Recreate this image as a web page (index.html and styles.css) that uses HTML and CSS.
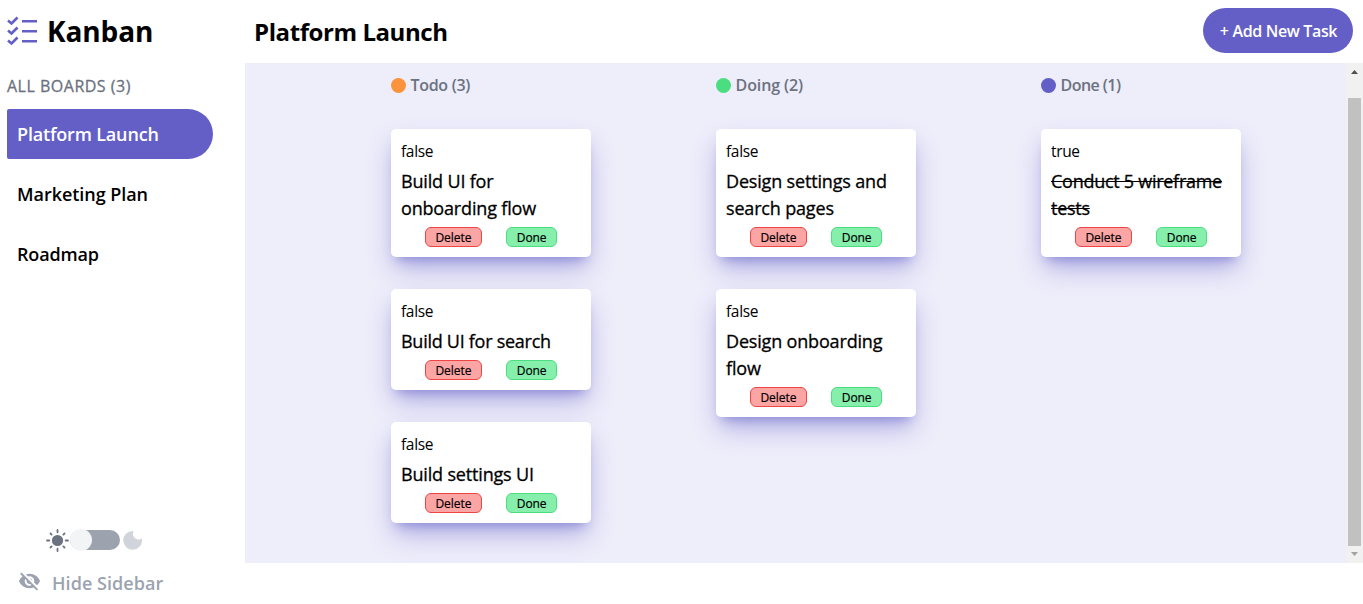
FILE: index.html
```
<!DOCTYPE html>
<html lang="en">
<head>
<meta charset="utf-8">
<title>Kanban</title>
<link rel="stylesheet" href="styles.css">
</head>
<body>
<div class="app">
  <aside class="sidebar">
    <div class="brand">
      <svg class="brand-icon" width="30" height="30" viewBox="0 0 30 30" fill="none" stroke="#635fc7">
        <path d="M1 4.500l3.500 3L10.500 1.500M1 14.500l3.500 3L10.500 11.500M1 24.500l3.500 3L10.500 21.500" stroke-width="2.600"/>
        <path d="M15 5.200h15M15 15.200h15M15 25.200h15" stroke-width="2.400"/>
      </svg>
      <h1 class="brand-name">Kanban</h1>
    </div>
    <p class="boards-label">ALL BOARDS (3)</p>
    <nav class="boards">
      <a class="board-link active">Platform Launch</a>
      <a class="board-link marketing">Marketing Plan</a>
      <a class="board-link roadmap">Roadmap</a>
    </nav>
    <div class="theme">
      <svg width="24" height="24" viewBox="0 0 24 24" fill="#6b7280" stroke="#6b7280" stroke-width="1.8" stroke-linecap="round">
        <circle cx="12.500" cy="12.500" r="4.700"/>
        <path d="M12.500 2v2.300M12.500 20.700V23M2 12.500h2.300M20.700 12.500H23M5.500 5.500l1.100 1.100M18.400 18.400l1.100 1.100M5.500 19.500l1.100-1.100M18.400 6.600l1.100-1.100"/>
      </svg>
      <span class="toggle"><span class="knob"></span></span>
      <svg class="moon" width="20" height="20" viewBox="0 0 20 20" fill="#d1d5db">
        <path d="M9.700 1A9.400 9.400 0 1 0 19 9.600c.1-.9-.6-1.300-1.300-.7A5.400 5.400 0 0 1 10.200 2.300c.3-.7.200-1.300-.5-1.300z"/>
      </svg>
    </div>
    <div class="hide">
      <svg class="eye" width="23" height="23" viewBox="0 0 24 24" fill="#9ca3af">
        <path d="M12 6.5c2.76 0 5 2.24 5 5 0 .51-.1 1-.24 1.46l3.06 3.06c1.39-1.23 2.49-2.77 3.18-4.53C21.27 7.11 17 4 12 4c-1.27 0-2.49.2-3.64.57l2.17 2.17c.47-.14.96-.24 1.47-.24zM2.71 3.16a.996.996 0 0 0 0 1.41l1.97 1.97A11.9 11.9 0 0 0 1 11.500C2.730 15.890 7 19 12 19c1.520 0 2.970-.3 4.310-.82l2.720 2.720a.996.996 0 1 0 1.410-1.410L4.130 3.160a.996.996 0 0 0-1.420 0zM12 16.500c-2.760 0-5-2.240-5-5 0-.77.18-1.500.49-2.140l1.570 1.570c-.03.180-.06.370-.06.570 0 1.660 1.340 3 3 3 .2 0 .38-.03.57-.07L14.140 16c-.65.320-1.370.5-2.140.5zm2.970-5.330a2.970 2.970 0 0 0-2.640-2.640l2.640 2.640z"/>
      </svg>
      <span>Hide Sidebar</span>
    </div>
  </aside>
  <main class="main">
    <header class="header">
      <h2 class="title">Platform Launch</h2>
      <button class="add">+ Add New Task</button>
    </header>
    <section class="board">
      <div class="columns">
        <div class="column">
          <h3 class="column-head"><i class="dot orange"></i><span>Todo (3)</span></h3>
          <article class="card"><p class="state">false</p><p class="name">Build UI for<br>onboarding flow</p><div class="actions"><button class="btn delete">Delete</button><button class="btn done">Done</button></div></article>
          <article class="card"><p class="state">false</p><p class="name tight">Build UI for search</p><div class="actions"><button class="btn delete">Delete</button><button class="btn done">Done</button></div></article>
          <article class="card"><p class="state">false</p><p class="name">Build settings UI</p><div class="actions"><button class="btn delete">Delete</button><button class="btn done">Done</button></div></article>
        </div>
        <div class="column">
          <h3 class="column-head doing"><i class="dot green"></i><span>Doing (2)</span></h3>
          <article class="card"><p class="state">false</p><p class="name">Design settings and<br>search pages</p><div class="actions"><button class="btn delete">Delete</button><button class="btn done">Done</button></div></article>
          <article class="card"><p class="state">false</p><p class="name">Design onboarding<br>flow</p><div class="actions"><button class="btn delete">Delete</button><button class="btn done">Done</button></div></article>
        </div>
        <div class="column">
          <h3 class="column-head finished"><i class="dot purple"></i><span>Done (1)</span></h3>
          <article class="card"><p class="state">true</p><p class="name tight struck">Conduct 5 wireframe<br>tests</p><div class="actions"><button class="btn delete">Delete</button><button class="btn done">Done</button></div></article>
        </div>
      </div>
      <div class="scrollbar">
        <svg width="17" height="17" viewBox="0 0 17 17" fill="#505050"><path d="M5 11h7L8.500 7z"/></svg>
        <div class="thumb"></div>
        <svg width="17" height="17" viewBox="0 0 17 17" fill="#a3a3a3"><path d="M5 6h7l-3.500 4z"/></svg>
      </div>
    </section>
  </main>
</div>
</body>
</html>
```
FILE: styles.css
```
* { box-sizing: border-box; margin: 0; padding: 0; }
body { font-family: "Open Sans", "Noto Sans", sans-serif; font-size: 16px; color: #000; background: #fff; overflow: hidden; }
button { font-family: inherit; color: inherit; }
svg { display: block; flex: none; }
.app { display: flex; height: 604px; }
.sidebar { width: 245px; flex: none; display: flex; flex-direction: column; padding-left: 7px; }
.brand { display: flex; align-items: center; gap: 10px; height: 62px; }
.brand-name { font-size: 28px; font-weight: 700; line-height: 40px; letter-spacing: -0.1px; }
.boards-label { margin-top: 12px; line-height: 24px; color: #6b7280; letter-spacing: 0.5px; -webkit-text-stroke: 0.3px; }
.boards { margin-top: 11px; display: flex; flex-direction: column; gap: 10px; }
.board-link { width: 206px; height: 50px; padding-left: 10px; line-height: 50px; font-size: 18px; font-weight: 600; letter-spacing: -0.17px; border-radius: 2px 25px 25px 2px; }
.marketing { letter-spacing: -0.05px; }
.active { color: #fff; background: #635fc7; }
.theme { margin-top: auto; padding-left: 38px; display: flex; align-items: center; height: 24px; }
.toggle { width: 50px; height: 20px; margin-left: 1px; border-radius: 10px; background: #9ca3af; display: flex; align-items: center; }
.knob { width: 22px; height: 22px; flex: none; border-radius: 50%; background: #f3f4f6; }
.moon { margin-left: 3px; }
.hide { display: flex; align-items: center; gap: 11px; height: 28px; margin: 17px 0 7px 11px; font-size: 18px; font-weight: 600; color: #9ca3af; letter-spacing: 0.05px; }
.eye { margin-bottom: 3px; }
.main { flex: 1; min-width: 0; }
.header { height: 63px; padding: 0 10px 2px 9px; display: flex; align-items: center; justify-content: space-between; }
.title { font-size: 24px; font-weight: 700; letter-spacing: -0.42px; padding-top: 1px; }
.add { width: 150px; height: 45px; border: 0; border-radius: 23px; background: #635fc7; color: #fff; font-size: 16px; font-weight: 600; letter-spacing: -0.35px; padding: 1px 0 0 1px; }
.board { height: 500px; background: #eeedfa; display: flex; justify-content: space-between; overflow: hidden; }
.columns { display: flex; gap: 125px; padding-left: 146px; }
.column { width: 200px; display: flex; flex-direction: column; gap: 32px; padding-top: 10px; }
.column-head { height: 24px; line-height: 24px; display: flex; align-items: center; gap: 4.5px; font-size: 16px; font-weight: 600; color: #6b7280; letter-spacing: -0.3px; }
.doing { letter-spacing: -0.1px; }
.finished { letter-spacing: -0.55px; }
.dot { width: 15px; height: 15px; border-radius: 50%; }
.orange { background: #fb923c; }
.green { background: #4ade80; }
.purple { background: #635fc7; }
.card { padding: 10px; background: #fff; border-radius: 5px; box-shadow: 0 14px 27px -4px rgba(99,95,199,.48), 0 8px 10px -6px rgba(99,95,199,.5); }
.state { line-height: 25px; height: 29px; font-size: 15.5px; letter-spacing: -0.35px; }
.name { font-size: 18px; line-height: 27px; letter-spacing: -0.17px; -webkit-text-stroke: 0.3px; white-space: nowrap; }
.tight { letter-spacing: -0.27px; }
.struck { text-decoration: line-through; }
.actions { margin-top: 5px; display: flex; justify-content: space-evenly; }
.btn { height: 20px; padding-top: 1px; font-size: 12px; line-height: 18px; border-radius: 6px; -webkit-text-stroke: 0.2px; letter-spacing: -0.05px; }
.delete { width: 57.600px; border: 1px solid #ef4444; background: #fca5a5; }
.done { width: 51.600px; border: 1px solid #4ade80; background: #86efac; letter-spacing: -0.15px; }
.scrollbar { width: 17px; background: #f1f1f1; display: flex; flex-direction: column; align-items: center; }
.thumb { width: 13px; height: 448px; margin: 18px 0 0; background: #c1c1c1; }
```
